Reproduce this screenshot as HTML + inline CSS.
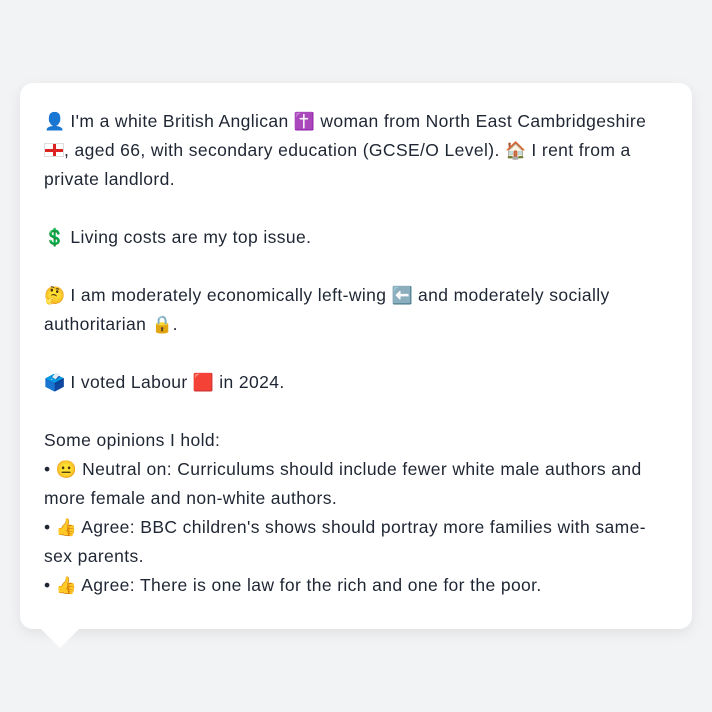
<!DOCTYPE html>
<html><head><meta charset="utf-8"><style>
html,body{margin:0;padding:0;background:#f2f3f5;width:712px;height:712px;overflow:hidden}
.card{position:absolute;left:20px;top:83px;width:672px;height:546px;background:#fff;border-radius:13px;box-shadow:0 4px 14px rgba(0,0,0,0.08)}
.tail{position:absolute;left:40px;top:628px;width:0;height:0;border-left:20px solid transparent;border-right:20px solid transparent;border-top:20px solid #fff}
.txt{position:absolute;left:44px;top:107px;font-family:"Liberation Sans","Noto Sans CJK JP",sans-serif;font-size:17.5px;line-height:29px;color:#1f2633;white-space:nowrap;letter-spacing:0.38px}
.e{font-size:17px;letter-spacing:0}
.flag{display:inline-block;width:20px;height:14px;background:#fff;border:1px solid #ddd;position:relative;vertical-align:-1px;box-sizing:border-box}
.flag:before{content:"";position:absolute;left:8px;top:0;width:3px;height:100%;background:#d22}
.flag:after{content:"";position:absolute;top:5px;left:0;height:3px;width:100%;background:#d22}
</style></head><body>
<div class="card"></div><div class="tail"></div>
<div class="txt">
<span class="e">👤</span> I'm a white British Anglican <span class="e">✝️</span> woman from North East Cambridgeshire<br>
<span class="flag"></span>, aged 66, with secondary education (GCSE/O Level). <span class="e">🏠</span> I rent from a<br>
private landlord.<br><br>
<span class="e">💲</span> Living costs are my top issue.<br><br>
<span class="e">🤔</span> I am moderately economically left-wing <span class="e">⬅️</span> and moderately socially<br>
authoritarian <span class="e">🔒</span>.<br><br>
<span class="e">🗳️</span> I voted Labour <span class="e">🟥</span> in 2024.<br><br>
Some opinions I hold:<br>
• <span class="e">😐</span> Neutral on: Curriculums should include fewer white male authors and<br>
more female and non-white authors.<br>
• <span class="e">👍</span> Agree: BBC children's shows should portray more families with same-<br>
sex parents.<br>
• <span class="e">👍</span> Agree: There is one law for the rich and one for the poor.
</div>
</body></html>
